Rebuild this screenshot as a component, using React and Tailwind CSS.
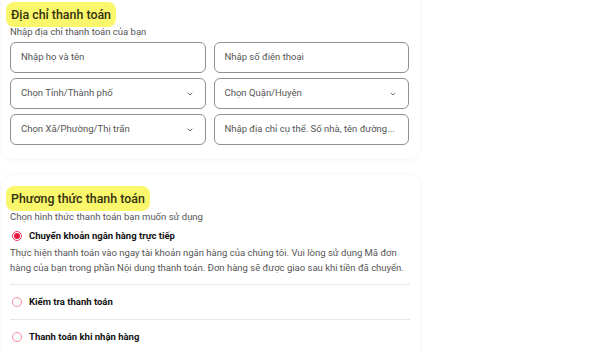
import { ChevronDown } from "lucide-react";

function Field({ placeholder, select }) {
  return (
    <div className="flex h-[31px] items-center justify-between rounded-md border border-[#8f8f8f] bg-white pl-[10px] pr-[11px]">
      <span className="whitespace-nowrap text-[9.5px] text-[#555]">{placeholder}</span>
      {select && <ChevronDown size={8} strokeWidth={2.5} className="text-[#555]" />}
    </div>
  );
}

function Heading({ children }) {
  return (
    <h2 className="ml-[4px] inline-block rounded-lg bg-[#fbf76c] px-[5px] py-[3px] text-[12.4px] font-medium leading-[19px] text-[#33320c]">
      {children}
    </h2>
  );
}

function Radio({ checked, label }) {
  return (
    <label className="flex h-[14px] items-center gap-[7px]">
      {checked ? (
        <span className="flex h-[10px] w-[10px] items-center justify-center rounded-full border border-[#ef3b5a] bg-white">
          <span className="h-[6px] w-[6px] rounded-full bg-[#e8193f]" />
        </span>
      ) : (
        <span className="h-[10px] w-[10px] rounded-full border-[1.5px] border-[#f48a9e]" />
      )}
      <span className="text-[9.5px] font-bold text-[#111]">{label}</span>
    </label>
  );
}

export default function App() {
  const font = { fontFamily: "Roboto, 'Noto Sans', sans-serif" };
  return (
    <div className="h-[351px] w-[600px] overflow-hidden bg-white" style={font}>
      <div className="w-[420px] pl-[2px]">
        <section className="-mt-[10px] rounded-xl bg-white pb-[14px] pl-[8px] pr-[11px] pt-[12px] shadow-[0_0_6px_rgba(0,0,0,0.06)]">
          <div className="-ml-[8px]">
            <Heading>Địa chỉ thanh toán</Heading>
          </div>
          <p className="-mt-[1px] text-[9.5px] leading-[12px] text-[#555]">Nhập địa chỉ thanh toán của bạn</p>
          <div className="mt-[4px] grid grid-cols-2 gap-x-[8px] gap-y-[5px]">
            <Field placeholder="Nhập họ và tên" />
            <Field placeholder="Nhập số điện thoại" />
            <Field placeholder="Chọn Tỉnh/Thành phố" select />
            <Field placeholder="Chọn Quận/Huyện" select />
            <Field placeholder="Chọn Xã/Phường/Thị trấn" select />
            <Field placeholder="Nhập địa chỉ cụ thể. Số nhà, tên đường..." />
          </div>
        </section>

        <section className="mt-[16px] rounded-xl bg-white pb-[20px] pl-[8px] pr-[10px] pt-[11px] shadow-[0_0_6px_rgba(0,0,0,0.06)]">
          <div className="-ml-[8px]">
            <Heading>Phương thức thanh toán</Heading>
          </div>
          <p className="mt-[0px] text-[9.5px] leading-[12px] text-[#555]">Chọn hình thức thanh toán bạn muốn sử dụng</p>
          <div className="mt-[6px] pl-[2px]">
            <Radio checked label="Chuyển khoản ngân hàng trực tiếp" />
          </div>
          <p className="mt-[2px] pb-[9px] text-[9.5px] leading-[15px] text-[#555]">
            Thực hiện thanh toán vào ngay tài khoản ngân hàng của chúng tôi. Vui lòng sử dụng Mã đơn
            <br />
            hàng của bạn trong phần Nội dung thanh toán. Đơn hàng sẽ được giao sau khi tiền đã chuyển.
          </p>
          <div className="border-t border-[#e8e8e8] py-[10px] pl-[2px]">
            <Radio label="Kiểm tra thanh toán" />
          </div>
          <div className="border-t border-[#e8e8e8] py-[10px] pl-[2px]">
            <Radio label="Thanh toán khi nhận hàng" />
          </div>
        </section>
      </div>
    </div>
  );
}
